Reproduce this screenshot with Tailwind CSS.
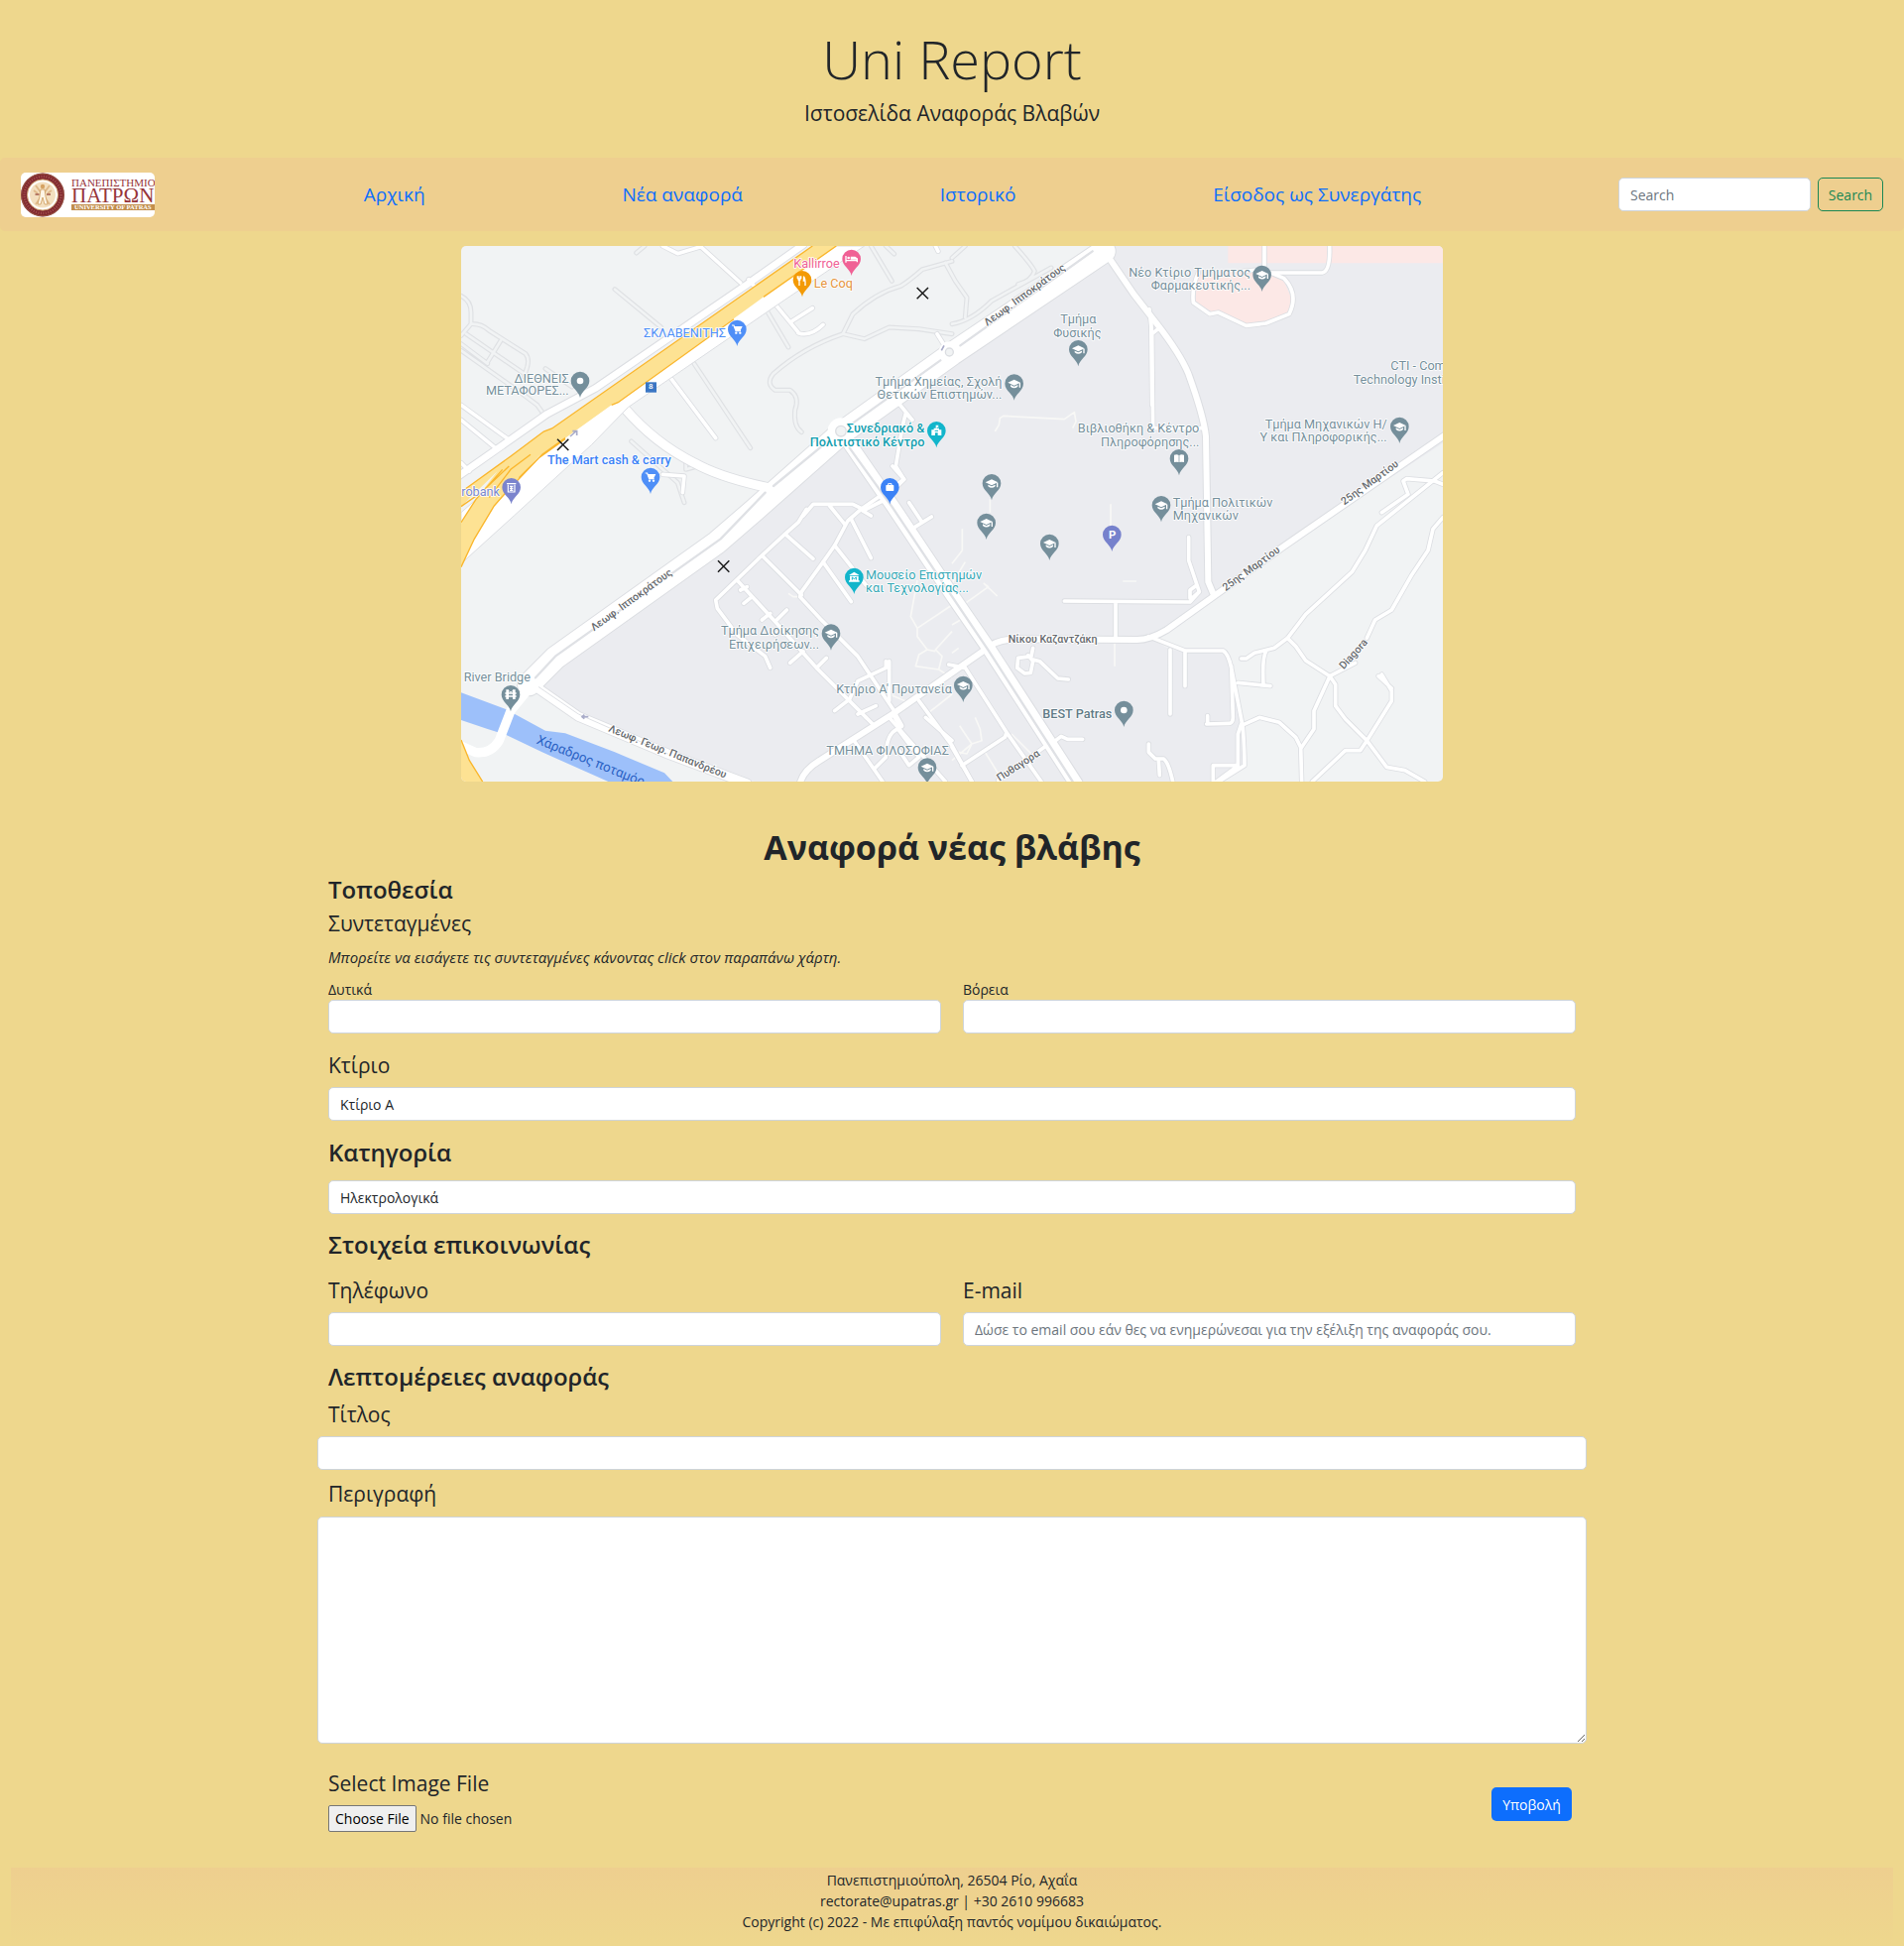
<!DOCTYPE html>
<html lang="el">
<head>
<meta charset="utf-8">
<meta name="viewport" content="width=device-width, initial-scale=1">
<title>Uni Report</title>
<script src="https://cdn.jsdelivr.net/npm/@tailwindcss/browser@4"></script>
</head>
<body class="bg-[#eed78d] font-['Open_Sans','Noto_Sans',sans-serif] text-sm leading-[21px] text-[#212529]">

<header class="pt-6 pb-[29px] text-center">
  <h1 class="text-[54px] leading-[70px] font-light">Uni Report</h1>
  <p class="mt-1 text-[21px] leading-8">Ιστοσελίδα Αναφοράς Βλαβών</p>
</header>

<nav class="flex h-[74px] items-center justify-between rounded-[5px] bg-[#eecf8f] px-[21px]">
  <a href="#" class="mr-3 block" aria-label="Πανεπιστήμιο Πατρών">
    <svg width="135" height="45" viewBox="0 0 135 45" class="block rounded-[5px] bg-white">
      <circle cx="22" cy="22.500" r="22" fill="#7f2830"/>
      <circle cx="22" cy="22.500" r="21.300" fill="none" stroke="#a8704f" stroke-width=".7"/>
      <circle cx="22" cy="22.500" r="18.500" fill="none" stroke="#a3524c" stroke-width="2.500" stroke-dasharray="1 1.500"/>
      <circle cx="22" cy="22.500" r="15.600" fill="#fff" stroke="#c99b68" stroke-width="1"/>
      <circle cx="22" cy="22.500" r="13" fill="#f3dfbf"/>
      <path d="M15 13l14 19M29 13L15 32M13 18l4 3M31 18l-4 3" stroke="#dfb98a" stroke-width="2" fill="none"/>
      <circle cx="22" cy="14" r="2.200" fill="#d5a263"/>
      <path d="M20 17h4l1 7 2 8h-3l-2-7-2 7h-3l2-8z" fill="#fdf5e6" stroke="#c9934f" stroke-width=".7"/>
      <path d="M14.500 22h4M26 22h4" stroke="#a35a4a" stroke-width="1.500"/>
      <g font-family="'Liberation Serif',serif" fill="#96353a">
        <text x="51" y="14" font-size="11">ΠΑΝΕΠΙΣΤΗΜΙΟ</text>
        <text x="51" y="30" font-size="21">ΠΑΤΡΩΝ</text>
      </g>
      <rect x="51" y="32" width="84" height="6" fill="#c28e4c"/>
      <text x="54" y="37.200" font-size="6.500" font-weight="bold" font-family="'Liberation Serif',serif" fill="#fff">UNIVERSITY OF PATRAS</text>
    </svg>
  </a>
  <a href="#" class="text-[19px] leading-7 text-[#0d6efd]">Αρχική</a>
  <a href="#" class="text-[19px] leading-7 text-[#0d6efd]">Νέα αναφορά</a>
  <a href="#" class="text-[19px] leading-7 text-[#0d6efd]">Ιστορικό</a>
  <a href="#" class="text-[19px] leading-7 text-[#0d6efd]">Είσοδος ως Συνεργάτης</a>
  <form class="flex gap-[7px]">
    <input type="search" placeholder="Search" aria-label="Search" class="h-[34px] w-[194px] rounded-[5px] border border-[#ced4da] bg-white px-[11px] placeholder:text-[#6c757d]">
    <button type="button" class="h-[34px] w-[66px] rounded-[5px] border border-[#198754] text-[#198754]">Search</button>
  </form>
</nav>

<main>
<svg viewBox="15 24 2970 1620" class="mx-auto mt-[15px] block w-full max-w-[990px] rounded-[5px] bg-[#f1f3f4]" role="img" aria-label="Χάρτης">
  <defs>
    <path id="pin" d="M0 51C-4 30-28 22-28 0A28 28 0 1 1 28 0C28 22 4 30 0 51Z"/>
    <g id="cap"><use href="#pin" fill="#758f9b"/><path d="M-19-3L0-12 19-3 0 6Z" fill="#fff"/><path d="M-11 4L0 9 11 4V9Q0 18-11 9ZM15-2h4V12h-4Z" fill="#fff"/></g>
    <g id="dot"><use href="#pin" fill="#758f9b"/><circle r="10" fill="#fff"/></g>
    <g id="cart"><use href="#pin" fill="#4f8ff7"/><path d="M-16-12h6L-4 5H11" fill="none" stroke="#fff" stroke-width="3.500"/><path d="M-10-9H16L10 3H-5Z" fill="#fff"/><circle cx="-3" cy="11" r="3.500" fill="#fff"/><circle cx="9" cy="11" r="3.500" fill="#fff"/></g>
    <path id="cross" d="M-17-17L17 17M17-17L-17 17" stroke="#1b1b1b" stroke-width="4.500"/>

    <g id="tracks">
      <path d="M15 175Q45 190 45 225V260L15 295M45 260Q75 258 100 280L210 350Q222 365 215 390L205 420M15 340L205 475 245 505 270 540M30 290L110 345 205 410M95 375L135 310M15 320L95 380M270 395L350 450"/>
      <path d="M480 155L620 270M720 380L890 635M940 220L1005 330M530 615L670 740 690 800M695 670V700L730 690M545 45L570 24M1255 24L1318 130M1300 24L1325 48"/>
      <path d="M1500 70L1410 95Q1370 130 1345 145 1270 165 1200 230L1170 290M1500 290L1400 275 1310 270 1235 305 1170 290Q1050 330 960 410 935 440 965 460H1010Q1040 480 1025 520 1020 570 1045 587"/>
      <path d="M1480 75L1510 130 1545 180 1540 240M1500 260Q1560 250 1620 190L1800 90M1690 24Q1740 80 1750 100 1740 130 1700 140M1500 60L1540 24"/>
    </g>
    <g id="lanes">
      <path d="M625 24L670 47 740 26 860 135M15 505L160 610M15 550L125 640M15 680L40 705M650 425L785 605"/>
      <path d="M885 125L905 150M965 200L1035 285M1010 255L1078 212M1035 287Q1070 300 1110 262M625 715L690 720 685 770M1450 24L1458 40M1455 290L1480 330"/>
      <path d="M1335 495L1380 550 1360 530 1350 570 1330 690 1355 730 1225 820 1185 855 1145 930 1110 980 1045 1070 1040 1085 1100 1150 1215 1265 1325 1430"/>
      <path d="M1320 690L1355 730 1290 795 1230 825M1130 810L1175 865M1230 825L1255 840M1050 840L1080 805H1200L1230 820"/>
      <path d="M1060 820L1035 860 995 895 925 960 785 1095 790 1120 850 1200 935 1265 950 1300M995 895L1080 970M925 960L1045 1080M1195 850L1255 968M1145 930L1240 1050M1110 980L1195 1100"/>
      <path d="M850 1035L965 1160 1090 1300 1240 1450M860 1065L880 1055M870 1105L895 1085M925 1155L950 1135M965 1160L1000 1125M965 1160L1000 1200M965 1200L985 1180M1010 1285L1050 1250M1090 1300L1120 1270"/>
      <path d="M1145 1430L1190 1395 1215 1340 1300 1300V1280M1310 1280V1400M1215 1440L1270 1415M1240 1450L1260 1470M1200 1515L1290 1644M1310 1450L1480 1644M1335 1485Q1300 1500 1300 1570L1265 1605M1340 1490L1400 1570 1370 1595 1340 1550M1400 1400L1500 1535 1560 1644M1420 1450L1500 1520"/>
      <path d="M2105 505L2102 240M2445 24V105H2620Q2645 100 2642 24M2245 105Q2225 150 2230 195L2280 230 2305 225 2390 265 2450 258 2520 230Q2550 170 2505 122L2440 95 2380 100"/>
      <path d="M2097 215L2105 290 2108 575H2260M2105 290L2130 270"/>
      <path d="M2216 905V975L2248 1070 2225 1090H2220V1065L2240 1050M1840 1098L2220 1101 2248 1070M1995 1100V1210"/>
      <path d="M1745 1240L1740 1265 1700 1270 1697 1300 1720 1317 1738 1315 1745 1280 1730 1262M1745 1275L1765 1280 1820 1332 1852 1335"/>
      <path d="M2095 1205L2205 1248H2320Q2335 1255 2345 1300L2380 1480Q2385 1550 2385 1595L2290 1655M2160 1245V1440M2205 1250V1355M2345 1295L2350 1450Q2350 1470 2335 1468L2270 1470M2273 1445V1465M2365 1345L2463 1355M2375 1470L2365 1500V1595H2290V1644M2360 1600L2300 1644"/>
      <path d="M2375 1475L2430 1450 2490 1465 2540 1510 2555 1540 2558 1644M2375 1272H2390L2415 1255 2475 1240 2515 1210 2570 1138 2710 1010 2750 945 2785 870 2860 810 2985 710M2450 1250Q2438 1270 2442 1350M2515 1210L2540 1235 2570 1278 2643 1325 2720 1285"/>
      <path d="M2643 1325L2595 1430V1485L2558 1540M2643 1325L2660 1350V1415L2690 1455 2755 1520 2815 1600 2870 1610 2930 1644M2755 1520L2735 1550H2690L2590 1644M2755 1520L2830 1400V1370L2800 1320M2800 1325H2790L2830 1362"/>
      <path d="M2755 1210L2780 1155 2830 1125 2890 1020 2940 945 2955 880 2985 845M2800 830L2880 775 2865 735 2875 728 2960 735 2985 745"/>
      <path d="M1490 1290L1540 1300 1665 1495 1660 1510 1530 1595M1500 1540L1560 1644M1665 1495L1770 1644M1800 1530L1830 1507 1850 1516H1895M1640 1640L1800 1525M2095 1530V1555L2115 1575H2140Q2155 1585 2168 1644M2125 1580L2128 1625"/>
      <path d="M1370 800L1410 860M1378 880L1438 843"/>
    </g>
    <g id="streets">
      <path d="M1975 60L2050 170 2120 260Q2190 350 2215 410 2262 540 2268 600L2275 1040 2290 1075"/>
      <path d="M3000 590L2500 935 2150 1185Q2100 1215 2060 1215L1690 1213Q1630 1215 1600 1245L1320 1440 1100 1580Q1050 1610 1040 1650"/>
      <path d="M1325 1440L1345 1475"/>
    </g>
  </defs>

  <path d="M1970 24L1500 350 1165 590 900 840 790 920 235 1345 370 1445 900 1644H2290L2390 1590 2375 1450 2340 1260 2160 1245 2100 1210 2500 940 2985 620V24Z" fill="#ebecf0"/>
  <path d="M2335 24H2985V76H2335ZM2245 110L2440 95 2500 120 2530 190 2510 235 2390 265 2300 230 2235 195Z" fill="#fce8e6"/>
  <path d="M15 1375L150 1425 270 1490 330 1498 480 1555 630 1618 655 1644H460L260 1555 150 1502 95 1485 15 1458Z" fill="#9dc0fa"/>

  <path d="M1630 585L1642 565 1645 545 1655 538 1840 548 1870 527 1875 555 1865 575M1980 805V880M1615 790V830M1531 880V945L1500 985M1540 980L1500 1045M1540 1105L1610 1055 1597 1045 1637 1083M1500 1170L1535 1150M2017 1038H2058M1992 1210V1295M1500 1255L1520 1240M1523 1475L1560 1530 1590 1520 1585 1485 1570 1450M1500 1580L1560 1530 1545 1560 1520 1555M1395 1035L1375 1145 1395 1180 1500 1110M1395 1180V1205L1425 1245 1400 1260 1390 1295 1460 1305 1470 1265 1450 1245 1500 1190M1425 1245L1450 1250M1460 1305L1500 1330M1430 1435L1500 1380M1005 1075L1020 1085H1040M1310 1380L1370 1405M1740 1560L1680 1500M1600 1555L1640 1620" fill="none" stroke-linejoin="round" stroke="#f8f8f6" stroke-width="5"/>

  <g fill="none" stroke-linecap="round" stroke-linejoin="round">
    <use href="#tracks" stroke="#dfe1e4" stroke-width="15"/>
    <use href="#tracks" stroke="#f1f3f4" stroke-width="8"/>
    <g stroke="#dcdee2">
      <use href="#lanes" stroke-width="16"/>
      <use href="#streets" stroke-width="24"/>
      <path d="M0 725L275 532 420 455 880 140 1050 20" stroke-width="26"/>
      <path d="M510 515Q600 620 720 680 800 725 945 755" stroke-width="32"/>
      <path d="M1960 40L1500 350 1165 590 900 825 790 920 300 1270 220 1350" stroke-width="74"/>
      <path d="M230 1350L370 1447 640 1560 880 1650" stroke-width="32"/>
      <path d="M1175 600L1320 810 1500 1080 1610 1240 1875 1650" stroke-width="46"/>
    </g>
    <g stroke="#fff">
      <use href="#lanes" stroke-width="11"/>
      <use href="#streets" stroke-width="18"/>
      <path d="M0 725L275 532 420 455 880 140 1050 20" stroke-width="20"/>
      <path d="M510 515Q600 620 720 680 800 725 945 755" stroke-width="27"/>
      <path d="M230 1350L165 1430 130 1520Q105 1560 60 1556L0 1530" stroke-width="28"/>
      <path d="M1960 40L1500 350 1165 590 900 825 790 920 300 1270 220 1350" stroke-width="68"/>
      <path d="M230 1350L370 1447 640 1560 880 1650" stroke-width="27"/>
      <path d="M1175 600L1320 810 1500 1080 1610 1240 1875 1650" stroke-width="40"/>
    </g>
    <g stroke="#dfe1e5" stroke-width="7">
      <path d="M1925 40L1525 325M1465 370L1200 560M1130 610L960 750M935 770L800 910 300 1265 240 1330M1190 635L1320 815 1500 1084 1610 1247 1865 1644"/>
      <path d="M250 1358L370 1440 640 1560" stroke-width="3"/>
    </g>
    <circle cx="1164" cy="584" r="40" fill="#fff"/><circle cx="1164" cy="584" r="16" fill="#f1f3f4" stroke="#dcdee2" stroke-width="4"/>
    <circle cx="1492" cy="345" r="32" fill="#fff"/><circle cx="1492" cy="345" r="12" fill="#f1f3f4" stroke="#dcdee2" stroke-width="4"/>
    <circle cx="1960" cy="24" r="30" fill="#fff"/>
  </g>

  <path d="M1130 24H1235L975 200 520 512 410 625 175 840 15 985V830L280 600Z" fill="#fff" stroke="#dcdee2" stroke-width="3"/>
  <path d="M1078 24H1150L930 178 490 497 470 505 330 605 250 660 150 770 115 810 55 910 15 995V860L60 790 125 705 15 812V768L165 660 265 585 290 576Z" fill="#fde293"/>
  <g fill="none" stroke="#fab62c" stroke-width="4">
    <path d="M1078 24L290 576 265 585 165 660 15 768M1150 24L930 178M840 245L490 497 470 505M330 608L250 665 150 770 115 810 55 910 15 995M15 812L75 770 160 690M15 860L60 790 140 700M225 655L165 700 100 785M330 605L260 655 190 725"/>
  </g>
  <path d="M15 1518L40 1580 80 1644H15Z" fill="#fde293"/>
  <path d="M15 1518L40 1580 80 1644" fill="none" stroke="#fab62c" stroke-width="4"/>
  <path d="M345 600L362 585M352 584H365V597M1468 340L1476 325M400 1448H382M388 1442L381 1448 388 1454" stroke="#a9acc9" stroke-width="5" fill="none"/>
  <rect x="573" y="436" width="33" height="31" fill="#3a76c4"/>
  <text x="589" y="457" text-anchor="middle" font-family="Roboto,sans-serif" font-weight="500" font-size="24" fill="#fff">8</text>

  <g font-family="Roboto,'Noto Sans',sans-serif" font-size="38" fill="#758f9b" stroke="#fff" stroke-width="5" stroke-linejoin="round" paint-order="stroke">
    <g text-anchor="end">
      <text x="1160" y="89" fill="#f06195">Kallirroe</text>
      <text x="816" y="300" fill="#4f8ff7">ΣΚΛΑΒΕΝΙΤΗΣ</text>
      <text x="341" y="438">ΔΙΕΘΝΕΙΣ</text>
      <text x="341" y="475">ΜΕΤΑΦΟΡΕΣ...</text>
      <text x="132" y="780" fill="#7b88cc">robank</text>
      <text x="1651" y="446">Τμήμα Χημείας, Σχολή</text>
      <text x="1651" y="486">Θετικών Επιστημών...</text>
      <g fill="#129eaf" font-weight="500">
        <text x="1417" y="588">Συνεδριακό &amp;</text>
        <text x="1417" y="629">Πολιτιστικό Κέντρο</text>
      </g>
      <text x="2403" y="116">Νέο Κτίριο Τμήματος</text>
      <text x="2403" y="157">Φαρμακευτικής...</text>
      <text x="2248" y="588">Βιβλιοθήκη &amp; Κέντρο</text>
      <text x="2248" y="629">Πληροφόρησης...</text>
      <text x="2816" y="575">Τμήμα Μηχανικών Η/</text>
      <text x="2816" y="616">Υ και Πληροφορικής...</text>
      <text x="1098" y="1201">Τμήμα Διοίκησης</text>
      <text x="1098" y="1242">Επιχειρήσεων...</text>
      <text x="1500" y="1377">Κτήριο Α' Πρυτανεία</text>
      <text x="1984" y="1452" font-weight="500" fill="#5f7a86">BEST Patras</text>
    </g>
    <text x="1082" y="150" fill="#e5933c">Le Coq</text>
    <text x="276" y="685" fill="#3b82f6" font-weight="500">The Mart cash &amp; carry</text>
    <text x="2827" y="399">CTI - Computer</text>
    <text x="2714" y="440">Technology Institute</text>
    <text x="2168" y="813">Τμήμα Πολιτικών</text>
    <text x="2168" y="853">Μηχανικών</text>
    <g fill="#35a8b6">
      <text x="1239" y="1031">Μουσείο Επιστημών</text>
      <text x="1239" y="1072">και Τεχνολογίας...</text>
    </g>
    <text x="23" y="1341">River Bridge</text>
    <text x="1120" y="1563">ΤΜΗΜΑ ΦΙΛΟΣΟΦΙΑΣ</text>
    <g text-anchor="middle">
      <text x="1882" y="258">Τμήμα</text>
      <text x="1879" y="299">Φυσικής</text>
    </g>
  </g>
  <g font-family="Roboto,'Noto Sans',sans-serif" font-size="32" font-weight="500" fill="#666a6e" stroke="#fff" stroke-width="5" paint-order="stroke" text-anchor="middle">
    <text transform="translate(1726 180) rotate(-36)">Λεωφ. Ιπποκράτους</text>
    <text transform="translate(536 1103) rotate(-36)">Λεωφ. Ιπποκράτους</text>
    <text transform="translate(2770 748) rotate(-36)">25ης Μαρτίου</text>
    <text transform="translate(2411 1008) rotate(-36)">25ης Μαρτίου</text>
    <text x="1805" y="1224">Νίκου Καζαντζάκη</text>
    <text transform="translate(2722 1265) rotate(-48)">Diagora</text>
    <text transform="translate(1706 1604) rotate(-33)">Πυθαγορα</text>
    <text transform="translate(636 1563) rotate(22)">Λεωφ. Γεωρ. Παπανδρέου</text>
    <text transform="translate(402 1593) rotate(22)" font-size="40" font-weight="400" fill="#2b62c4" stroke="none">Χάραδρος ποταμός</text>
  </g>

  <use href="#cap" x="2438" y="111"/>
  <use href="#cap" x="1882" y="337"/>
  <use href="#cap" x="1688" y="440"/>
  <use href="#cap" x="2854" y="570"/>
  <use href="#cap" x="1620" y="742"/>
  <use href="#cap" x="2133" y="808"/>
  <use href="#cap" x="1604" y="861"/>
  <use href="#cap" x="1795" y="924"/>
  <use href="#cap" x="1134" y="1196"/>
  <use href="#cap" x="1534" y="1353"/>
  <use href="#cap" x="1425" y="1601"/>
  <use href="#dot" x="375" y="432"/>
  <use href="#dot" x="2020" y="1428"/>
  <use href="#cart" x="850" y="276"/>
  <use href="#cart" x="588" y="723"/>
  <g transform="translate(1196 63)"><use href="#pin" fill="#f06195"/><path d="M-17-9V11M-17 5H17M17 10V-2" stroke="#fff" stroke-width="4" fill="none"/><circle cx="-9" cy="-3" r="4" fill="#fff"/><path d="M-3-7H11Q17-6 17 2H-3Z" fill="#fff"/></g>
  <g transform="translate(1047 127)"><use href="#pin" fill="#f39a06"/><path d="M-14-12V-4M-9-12V-4M-4-12V-4M-9-2V17" stroke="#fff" stroke-width="4" fill="none"/><path d="M-15-6H-3Q-4 3-9 3T-15-6ZM3-12Q12-12 11 17H7V4H2Z" fill="#fff"/></g>
  <g transform="translate(167 754)"><use href="#pin" fill="#7b84cd"/><path d="M-14-11H14M-10-8V14H10V-8M-5-3H5M-5 3H5M-5 9H5M0-5V10" stroke="#fff" stroke-width="3.500" fill="none"/></g>
  <g transform="translate(1453 583)"><use href="#pin" fill="#12b5cb"/><path d="M-15 14V-3H-8V-8H-2V-17H7L5-14 7-11H1V-8H8V-3H15V14H4V6H-4V14Z" fill="#fff"/><path d="M-5 0H5" stroke="#12b5cb" stroke-width="3"/></g>
  <g transform="translate(1312 754)"><use href="#pin" fill="#3b82f6"/><rect x="-12" y="-7" width="24" height="18" rx="2" fill="#fff"/><path d="M-5-6V-11H5V-6" fill="none" stroke="#fff" stroke-width="3"/></g>
  <g transform="translate(2187 667)"><use href="#pin" fill="#758f9b"/><path d="M-15-11Q-6-14-1-10V11Q-8 9-15 11ZM15-11Q6-14 1-10V11Q8 9 15 11Z" fill="#fff"/></g>
  <g transform="translate(1984 897)"><use href="#pin" fill="#7681cc"/><text x="1" y="12" text-anchor="middle" font-family="Roboto,sans-serif" font-weight="700" font-size="34" fill="#fff">P</text></g>
  <g transform="translate(1204 1026)"><use href="#pin" fill="#12b5cb"/><path d="M0-16L16-6H-16ZM-13-4H13V10H-13ZM-16 10H16V14H-16Z" fill="#fff"/><path d="M-6 8V0L0 5 6 0V8" fill="none" stroke="#12b5cb" stroke-width="3"/></g>
  <g transform="translate(165 1381)"><use href="#pin" fill="#758f9b"/><path d="M-17-4H17M-17 5H17" stroke="#fff" stroke-width="4"/><path d="M-10-15V14M10-15V14" stroke="#fff" stroke-width="8"/><path d="M-6-12Q0-2 6-12" stroke="#fff" stroke-width="3" fill="none"/></g>

  <use href="#cross" x="1411" y="167"/>
  <use href="#cross" x="323" y="625"/>
  <use href="#cross" x="809" y="993"/>
</svg>

<form class="mx-auto mt-[45px] w-2/3">
  <h2 class="text-center text-[34px] leading-[42px] font-bold">Αναφορά νέας βλάβης</h2>

  <div class="px-[11px]">
    <h3 class="mt-2 text-[24px] leading-7 font-semibold">Τοποθεσία</h3>
    <h4 class="mt-2 text-[21px] leading-6">Συντεταγμένες</h4>
    <p class="mt-3 text-[15px] leading-5 italic">Μπορείτε να εισάγετε τις συντεταγμένες κάνοντας click στον παραπάνω χάρτη.</p>
    <div class="mt-3 grid grid-cols-2 gap-[22px]">
      <div>
        <label for="west" class="block">Δυτικά</label>
        <input id="west" type="text" class="block h-[34px] w-full rounded-[5px] border border-[#ced4da] bg-white px-[11px]">
      </div>
      <div>
        <label for="north" class="block">Βόρεια</label>
        <input id="north" type="text" class="block h-[34px] w-full rounded-[5px] border border-[#ced4da] bg-white px-[11px]">
      </div>
    </div>
    <label for="building" class="mt-5 block text-[21px] leading-6">Κτίριο</label>
    <select id="building" class="mt-2.5 block h-[34px] w-full appearance-none rounded-[5px] border border-[#ced4da] bg-white px-[11px]"><option>Κτίριο Α</option><option>Κτίριο Β</option></select>

    <h3 class="mt-[18px] text-[24px] leading-7 font-semibold"><label for="category">Κατηγορία</label></h3>
    <select id="category" class="mt-3.5 block h-[34px] w-full appearance-none rounded-[5px] border border-[#ced4da] bg-white px-[11px]"><option>Ηλεκτρολογικά</option><option>Υδραυλικά</option></select>

    <h3 class="mt-[17px] text-[24px] leading-7 font-semibold">Στοιχεία επικοινωνίας</h3>
    <div class="mt-5 grid grid-cols-2 gap-[22px]">
      <div>
        <label for="phone" class="block text-[21px] leading-6">Τηλέφωνο</label>
        <input id="phone" type="tel" class="mt-2.5 block h-[34px] w-full rounded-[5px] border border-[#ced4da] bg-white px-[11px]">
      </div>
      <div>
        <label for="email" class="block text-[21px] leading-6">E-mail</label>
        <input id="email" type="email" placeholder="Δώσε το email σου εάν θες να ενημερώνεσαι για την εξέλιξη της αναφοράς σου." class="mt-2.5 block h-[34px] w-full rounded-[5px] border border-[#ced4da] bg-white px-[11px] placeholder:text-[#6c757d]">
      </div>
    </div>

    <h3 class="mt-[17px] text-[24px] leading-7 font-semibold">Λεπτομέρειες αναφοράς</h3>
    <label for="subject" class="mt-3 block text-[21px] leading-6">Τίτλος</label>
  </div>
  <input id="subject" type="text" class="mt-2.5 block h-[34px] w-full rounded-[5px] border border-[#ced4da] bg-white px-[11px]">
  <label for="details" class="mt-3 block px-[11px] text-[21px] leading-6">Περιγραφή</label>
  <textarea id="details" class="mt-[11px] block h-[229px] w-full rounded-[5px] border border-[#ced4da] bg-white px-[11px] py-1.5"></textarea>

  <div class="mt-7 flex items-end justify-between pr-[15px] pl-[11px]">
    <div>
      <label for="photo" class="block text-[21px] leading-6">Select Image File</label>
      <input id="photo" type="file" class="mt-2.5 block h-[27px] file:mr-1 file:h-[27px] file:rounded-[2px] file:border file:border-[#767676] file:bg-[#efefef] file:px-1.5 file:text-black">
    </div>
    <button type="button" class="mb-[11px] h-[34px] w-[81px] rounded-[5px] bg-[#0d6efd] text-white">Υποβολή</button>
  </div>
</form>
</main>

<footer class="mx-[11px] mt-9 bg-linear-to-b from-[#eecf8f] to-[#eed78d] pt-0.5 pb-3.5 text-center">
  <p>Πανεπιστημιούπολη, 26504 Ρίο, Αχαΐα</p>
  <p>rectorate@upatras.gr | +30 2610 996683</p>
  <p>Copyright (c) 2022 - Με επιφύλαξη παντός νομίμου δικαιώματος.</p>
</footer>
</body>
</html>
